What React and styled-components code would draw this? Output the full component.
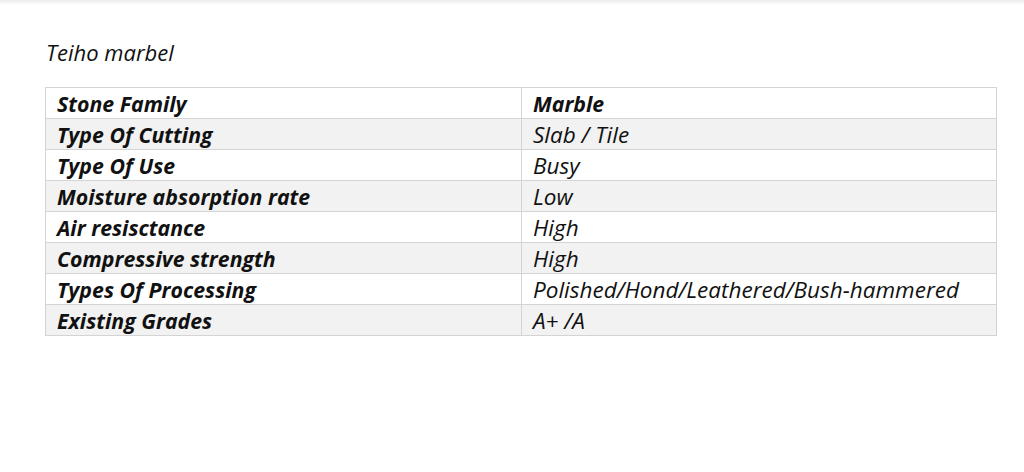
import styled, { createGlobalStyle } from 'styled-components';

const GlobalStyle = createGlobalStyle`
  html, body {
    margin: 0;
    padding: 0;
    background: #ffffff;
  }
  body {
    font-family: "Open Sans", "Liberation Sans", sans-serif;
    color: #111111;
  }
`;

const rows = [
  ['Stone Family', 'Marble'],
  ['Type Of Cutting', 'Slab / Tile'],
  ['Type Of Use', 'Busy'],
  ['Moisture absorption rate', 'Low'],
  ['Air resisctance', 'High'],
  ['Compressive strength', 'High'],
  ['Types Of Processing', 'Polished/Hond/Leathered/Bush-hammered'],
  ['Existing Grades', 'A+ /A'],
];

const App = () => {
  return (
    <Page>
      <GlobalStyle />
      <TopShade />
      <Content>
        <Title>Teiho marbel</Title>
        <Table>
          <tbody>
            {rows.map(([label, value], i) => (
              <Row key={label} $shaded={i % 2 === 1}>
                <LabelCell>{label}</LabelCell>
                <ValueCell $bold={i === 0}>{value}</ValueCell>
              </Row>
            ))}
          </tbody>
        </Table>
      </Content>
    </Page>
  );
};

export default App;

const Page = styled.div`
  width: 1024px;
  height: 472px;
  overflow: hidden;
  background: #ffffff;
`;

const TopShade = styled.div`
  height: 5px;
  background: linear-gradient(#ededed, #ffffff);
`;

const Content = styled.div`
  padding: 33px 27px 0 45px;
`;

const Title = styled.div`
  font-style: italic;
  font-size: 22px;
  line-height: 28px;
  margin: 0 0 21px 1px;
`;

const Table = styled.table`
  width: 952px;
  border-collapse: collapse;
  table-layout: fixed;
`;

const Row = styled.tr`
  height: 31px;
  background: ${(p) => (p.$shaded ? '#f2f2f2' : '#ffffff')};
`;

const Cell = styled.td`
  border: 1px solid #d4d4d4;
  padding: 0 11px;
  font-style: italic;
  font-size: 22.5px;
  line-height: 29px;
  white-space: nowrap;
  vertical-align: middle;
`;

const LabelCell = styled(Cell)`
  width: 476px;
  box-sizing: border-box;
  font-weight: 700;
  font-size: 21.3px;
`;

const ValueCell = styled(Cell)`
  font-weight: ${(p) => (p.$bold ? 700 : 400)};
  font-size: ${(p) => (p.$bold ? '21.3px' : '22.5px')};
`;
